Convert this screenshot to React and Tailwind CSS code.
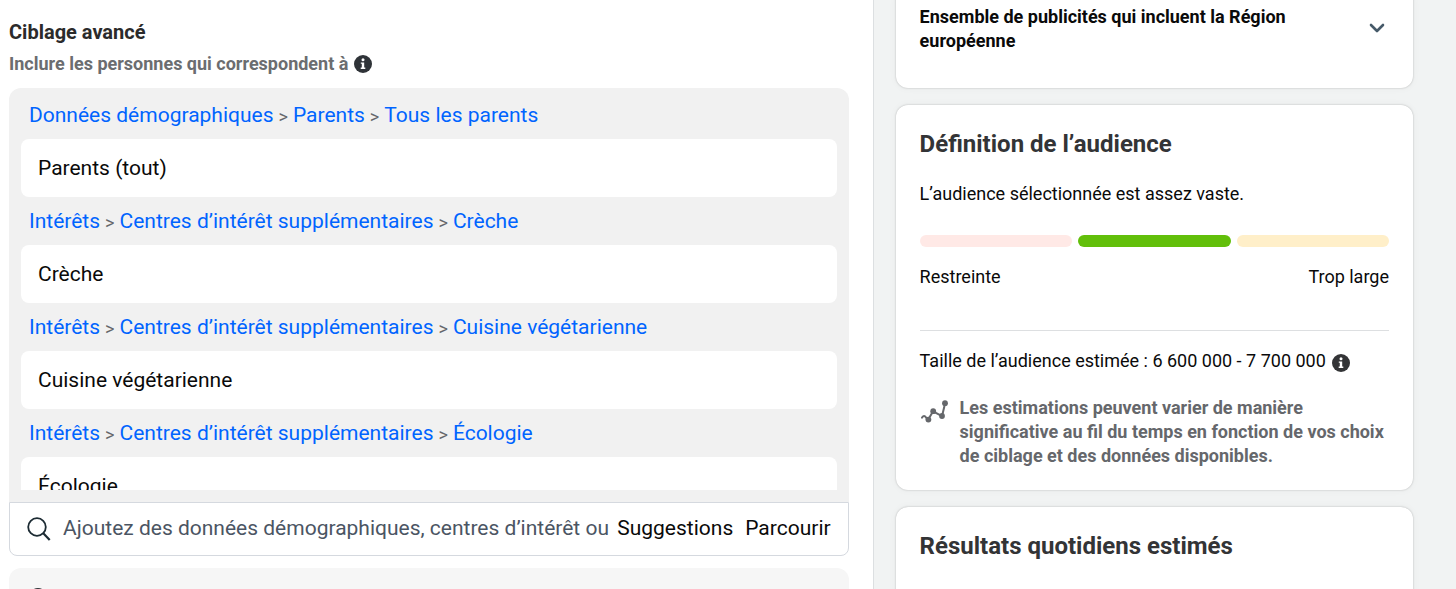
import { useState } from 'react'

const groups = [
  { path: ['Données démographiques', 'Parents', 'Tous les parents'], item: 'Parents (tout)' },
  { path: ['Intérêts', 'Centres d’intérêt supplémentaires', 'Crèche'], item: 'Crèche' },
  {
    path: ['Intérêts', 'Centres d’intérêt supplémentaires', 'Cuisine végétarienne'],
    item: 'Cuisine végétarienne',
  },
  { path: ['Intérêts', 'Centres d’intérêt supplémentaires', 'Écologie'], item: 'Écologie' },
]

function InfoIcon({ className }) {
  return (
    <svg viewBox="0 0 18 18" className={`h-[18px] w-[18px] shrink-0 ${className}`} aria-hidden="true">
      <circle cx="9" cy="9" r="9" fill="currentColor" />
      <circle cx="9" cy="4.8" r="1.5" fill="#fff" />
      <path d="M6.8 7.4h3.4v5.2h1.1v1.4H6.7v-1.4h1.1V8.8h-1z" fill="#fff" />
    </svg>
  )
}

function SearchIcon() {
  return (
    <svg
      viewBox="0 0 24 24"
      className="h-6 w-6 shrink-0 text-[#1c2b33]"
      fill="none"
      stroke="currentColor"
      strokeWidth="1.8"
      aria-hidden="true"
    >
      <circle cx="10" cy="10" r="8.8" />
      <path d="M16.3 16.3l6.4 6.6" strokeWidth="2.2" />
    </svg>
  )
}

function TrendIcon() {
  return (
    <svg viewBox="0 0 28 24" className="mt-1 h-6 w-7 shrink-0 text-[#65676b]" aria-hidden="true">
      <path
        d="M2 17.6c1.4-2 2.8-2 4 0l2.2 2 4.8-8.2 9 4.8 3-12.4"
        fill="none"
        stroke="currentColor"
        strokeWidth="2"
        strokeLinejoin="round"
        strokeLinecap="round"
      />
      <circle cx="8.4" cy="19.6" r="2.9" fill="currentColor" />
      <circle cx="13.2" cy="11.2" r="2.9" fill="currentColor" />
      <circle cx="22" cy="16" r="2.9" fill="currentColor" />
      <circle cx="25" cy="3.2" r="2.9" fill="currentColor" />
    </svg>
  )
}

function Card({ className = '', children }) {
  return (
    <section
      className={`shrink-0 rounded-xl bg-white px-6 shadow-[0_0_2px_rgba(0,0,0,0.25),0_0_8px_rgba(0,0,0,0.04)] ${className}`}
    >
      {children}
    </section>
  )
}

function TargetGroup({ path, item }) {
  return (
    <div>
      <div className="flex h-12 items-center gap-[5px] px-2 pt-[2px] text-[21px] whitespace-nowrap">
        {path.map((p, i) => (
          <span key={p} className="flex items-center gap-[5px]">
            {i > 0 && <span className="text-[18px] text-[#65676b]">&gt;</span>}
            <a href="#" className="text-[#0064ff]">
              {p}
            </a>
          </span>
        ))}
      </div>
      <div className="flex h-[58px] items-center rounded-lg bg-white px-[17px] pt-[2px] text-[21px]">
        {item}
      </div>
    </div>
  )
}

export default function App() {
  const [query, setQuery] = useState('')

  return (
    <div className="flex h-screen overflow-hidden bg-[#f1f3f3] font-[Roboto,sans-serif] text-[#0a0a0a]">
      <main className="min-w-0 flex-1 border-r border-[#dcdfe1] bg-white pt-5 pr-6 pl-[9px]">
        <h2 className="text-[20px] leading-6 font-bold text-[#2b2b2b]">Ciblage avancé</h2>
        <div className="mt-2 flex items-center gap-[6px] text-[18px] leading-6 font-bold text-[#6b6d70]">
          Inclure les personnes qui correspondent à
          <InfoIcon className="text-[#2f3338]" />
        </div>

        <div className="mt-3 rounded-t-xl bg-[#f1f1f1] px-3 pt-[3px] pb-3">
          <div className="h-[399px] overflow-hidden">
            {groups.map((g) => (
              <TargetGroup key={g.item} path={g.path} item={g.item} />
            ))}
          </div>
        </div>
        <div className="flex h-[54px] items-center rounded-b-lg border border-[#d5d9df] px-[17px] text-[21px]">
          <SearchIcon />
          <input
            type="text"
            aria-label="Ajoutez des données démographiques, centres d’intérêt ou comportements"
            placeholder="Ajoutez des données démographiques, centres d’intérêt ou"
            value={query}
            onChange={(e) => setQuery(e.target.value)}
            className="mr-2 ml-3 min-w-0 flex-1 outline-none placeholder:text-[#4b5563]"
          />
          <button type="button">Suggestions</button>
          <button type="button" className="ml-3">
            Parcourir
          </button>
        </div>

        <div className="mt-3 h-20 rounded-xl bg-[#f6f6f6] px-5 pt-5">
          <InfoIcon className="text-[#2f3338]" />
        </div>
      </main>

      <aside className="flex w-2/5 flex-col gap-[17px] pr-[43px] pl-[22px]">
        <Card className="-mt-3 flex h-[100px] items-start gap-4 pt-[17px]">
          <h3 className="min-w-0 flex-1 pr-10 text-[18px] leading-6 font-bold">
            Ensemble de publicités qui incluent la Région européenne
          </h3>
          <button type="button" aria-label="Afficher" className="mt-[18px] mr-1">
            <svg
              viewBox="0 0 16 10"
              className="h-[10px] w-4 text-[#465a69]"
              fill="none"
              stroke="currentColor"
              strokeWidth="2.6"
              strokeLinecap="round"
              strokeLinejoin="round"
              aria-hidden="true"
            >
              <path d="M2 2l6 6 6-6" />
            </svg>
          </button>
        </Card>

        <Card className="pt-[25px] pb-[22px]">
          <h2 className="text-[24px] leading-7 font-bold text-[#333436]">Définition de l’audience</h2>
          <p className="mt-6 text-[18px] leading-6">L’audience sélectionnée est assez vaste.</p>
          <div className="mt-[29px] flex gap-[6px]">
            <div className="h-3 flex-1 rounded-full bg-[#ffe9e6]" />
            <div className="h-3 flex-1 rounded-full bg-[#62bf0a]" />
            <div className="h-3 flex-1 rounded-full bg-[#ffefc9]" />
          </div>
          <div className="mt-[18px] flex justify-between text-[18px] leading-6">
            <span>Restreinte</span>
            <span>Trop large</span>
          </div>
          <hr className="mt-[41px] border-[#dddfe1]" />
          <div className="mt-[18px] flex items-center gap-[6px] text-[18px] leading-6">
            Taille de l’audience estimée : 6 600 000 - 7 700 000
            <InfoIcon className="mt-1 text-[#333436]" />
          </div>
          <div className="mt-[23px] flex gap-3 text-[18px] leading-6 font-bold text-[#65676b]">
            <TrendIcon />
            <p>
              Les estimations peuvent varier de manière significative au fil du temps en fonction de vos
              choix de ciblage et des données disponibles.
            </p>
          </div>
        </Card>

        <Card className="pt-[25px] pb-16">
          <h2 className="text-[24px] leading-7 font-bold text-[#333436]">Résultats quotidiens estimés</h2>
        </Card>
      </aside>
    </div>
  )
}
